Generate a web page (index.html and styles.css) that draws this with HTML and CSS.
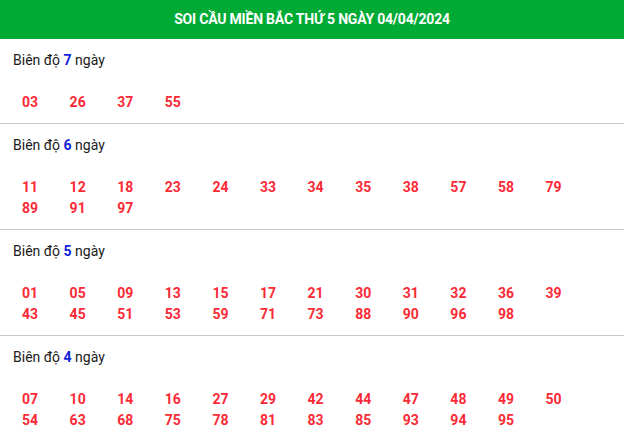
FILE: index.html
```html
<!DOCTYPE html>
<html lang="vi">
<head>
<meta charset="utf-8">
<title>Soi cầu miền Bắc</title>
<link rel="stylesheet" href="styles.css">
</head>
<body>
<div class="box">
  <div class="head">SOI CẦU MIỀN BẮC THỨ 5 NGÀY 04/04/2024</div>
  <div class="sec">
    <div class="lbl">Biên độ <b>7</b> ngày</div>
    <div class="nums">
      <span>03</span><span>26</span><span>37</span><span>55</span>
    </div>
  </div>
  <div class="sec">
    <div class="lbl">Biên độ <b>6</b> ngày</div>
    <div class="nums">
      <span>11</span><span>12</span><span>18</span><span>23</span><span>24</span><span>33</span><span>34</span><span>35</span><span>38</span><span>57</span><span>58</span><span>79</span>
      <span>89</span><span>91</span><span>97</span>
    </div>
  </div>
  <div class="sec">
    <div class="lbl">Biên độ <b>5</b> ngày</div>
    <div class="nums">
      <span>01</span><span>05</span><span>09</span><span>13</span><span>15</span><span>17</span><span>21</span><span>30</span><span>31</span><span>32</span><span>36</span><span>39</span>
      <span>43</span><span>45</span><span>51</span><span>53</span><span>59</span><span>71</span><span>73</span><span>88</span><span>90</span><span>96</span><span>98</span>
    </div>
  </div>
  <div class="sec">
    <div class="lbl">Biên độ <b>4</b> ngày</div>
    <div class="nums">
      <span>07</span><span>10</span><span>14</span><span>16</span><span>27</span><span>29</span><span>42</span><span>44</span><span>47</span><span>48</span><span>49</span><span>50</span>
      <span>54</span><span>63</span><span>68</span><span>75</span><span>78</span><span>81</span><span>83</span><span>85</span><span>93</span><span>94</span><span>95</span>
    </div>
  </div>
</div>
</body>
</html>
```
FILE: styles.css
```css
html, body {
  margin: 0;
  padding: 0;
  background: #fff;
}
body {
  font-family: Roboto, "Liberation Sans", Arial, sans-serif;
  color: #222;
}
.box {
  width: 624px;
}
.head {
  height: 39px;
  line-height: 39px;
  background: #00ab35;
  color: #fff;
  font-weight: 700;
  font-size: 14px;
  text-align: center;
  letter-spacing: -0.2px;
}
.sec {
  padding: 10px 0 10px;
  border-bottom: 1px solid #c8c8c8;
}
.sec:last-child {
  border-bottom: none;
}
.lbl {
  padding-left: 13px;
  font-size: 14px;
  line-height: 22px;
  color: #1a1a1a;
}
.lbl b {
  color: #1122dd;
  font-weight: 700;
}
.nums {
  margin-top: 21px;
  padding-left: 22px;
  display: grid;
  grid-template-columns: repeat(12, 47.6px);
  line-height: 21px;
  font-size: 14px;
  font-weight: 700;
  color: #fb2a36;
}
```
